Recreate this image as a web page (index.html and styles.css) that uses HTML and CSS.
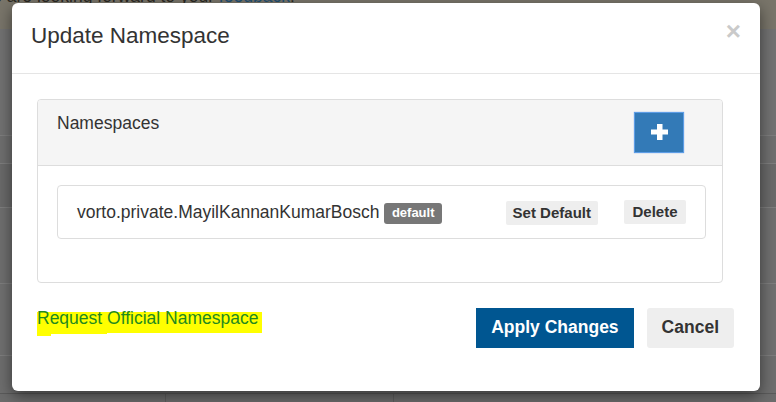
FILE: index.html
```html
<!DOCTYPE html>
<html>
<head>
<meta charset="utf-8">
<link rel="stylesheet" href="styles.css">
</head>
<body>
<div class="page">
  <div class="page-top"><p class="page-text">We are looking forward to your <span class="page-link">feedback</span>!</p></div>
  <div class="page-row r1"></div>
  <div class="page-row r2"></div>
  <div class="page-row r3"></div>
  <div class="page-row r4"></div>
  <div class="page-row r5"></div>
  <div class="page-row r6"><span class="cell c1"></span><span class="cell c2"></span><span class="cell c3"></span></div>
</div>

<div class="modal">
  <div class="modal-header">
    <h4 class="modal-title">Update Namespace</h4>
    <button class="close" type="button">×</button>
  </div>
  <div class="modal-body">
    <div class="panel">
      <div class="panel-heading">
        <span class="panel-title">Namespaces</span>
        <button class="btn-add" type="button">
          <svg width="17" height="16" viewBox="0 0 17 16"><rect x="6" y="0" width="5.5" height="16" fill="#fff"/><rect x="0" y="5.5" width="17" height="5" fill="#fff"/></svg>
        </button>
      </div>
      <div class="panel-body">
        <div class="list-item">
          <div class="ns-name">vorto.private.MayilKannanKumarBosch <span class="label">default</span></div>
          <div class="item-actions">
            <button class="btn-xs btn-setdefault" type="button">Set Default</button>
            <button class="btn-xs btn-delete" type="button">Delete</button>
          </div>
        </div>
      </div>
    </div>
  </div>
  <div class="modal-footer">
    <a class="request-link">Request Official Namespace</a>
    <div class="footer-actions">
      <button class="btn-apply" type="button">Apply Changes</button>
      <button class="btn-cancel" type="button">Cancel</button>
    </div>
  </div>
</div>
</body>
</html>
```

FILE: styles.css
```css
html, body {
  margin: 0;
  padding: 0;
}
body {
  width: 776px;
  height: 402px;
  overflow: hidden;
  position: relative;
  background: #6e6e6e;
  font-family: "Liberation Sans", Arial, sans-serif;
  font-size: 17.5px;
  color: #333;
}
button {
  font-family: inherit;
  border: 0;
  cursor: pointer;
}

/* page behind the backdrop */
.page {
  display: flex;
  flex-direction: column;
  height: 402px;
  overflow: hidden;
}
.page-top {
  height: 29px;
  flex: none;
  background: #79756a;
  overflow: hidden;
}
.page-text {
  margin: -14px 0 0 -24px;
  font-size: 17.5px;
  line-height: 20px;
  color: #2a2822;
  white-space: nowrap;
}
.page-link {
  color: #1f4f72;
}
.page-row {
  flex: none;
  border-bottom: 1px solid #7e7e7e;
  box-sizing: border-box;
}
.r1 { height: 107px; background: #727272; }
.r2 { height: 28px; background: #6f6f6f; }
.r3 { height: 44px; background: #6a6a6a; }
.r4 { height: 76px; background: #6f6f6f; }
.r5 { height: 72px; background: #707070; }
.r6 { height: 9px; background: #6c6c6c; border-bottom: 0; border-top: 1px solid #5a5a5a; display: flex; margin-top: 37px; }
.cell { display: block; height: 100%; border-right: 1px solid #5e5e5e; }
.c1 { width: 165px; }
.c2 { width: 227px; }
.c3 { flex: 1; border-right: 0; }

/* modal */
.modal {
  position: absolute;
  left: 12px;
  top: 3px;
  width: 748px;
  height: 388px;
  background: #fff;
  border-radius: 6px;
  box-shadow: 0 5px 15px rgba(0, 0, 0, 0.5);
  display: flex;
  flex-direction: column;
  box-sizing: border-box;
}
.modal-header {
  height: 71px;
  box-sizing: border-box;
  border-bottom: 1px solid #e5e5e5;
  padding: 20px 20px 0 19px;
  display: flex;
  justify-content: space-between;
  align-items: flex-start;
}
.modal-title {
  margin: 0;
  font-size: 22.5px;
  font-weight: normal;
  line-height: 25px;
  color: #333;
}
.close {
  background: none;
  padding: 0;
  font-size: 26px;
  font-weight: bold;
  line-height: 26px;
  color: #cacaca;
  margin-top: -5px;
  margin-right: -1px;
}

.modal-body {
  padding: 25px 37px 0 25px;
}
.panel {
  border: 1px solid #ddd;
  border-radius: 4px;
  height: 184px;
  box-sizing: border-box;
}
.panel-heading {
  background: #f5f5f5;
  border-bottom: 1px solid #ddd;
  border-radius: 3px 3px 0 0;
  padding: 12px 38px 12px 19px;
  display: flex;
  justify-content: space-between;
  align-items: flex-start;
}
.panel-title {
  line-height: 25px;
  margin-top: -1px;
  color: #333;
}
.btn-add {
  width: 50px;
  height: 41px;
  box-sizing: border-box;
  background: #337ab7;
  border: 1px solid #5d9de6;
  box-shadow: 0 0 1px 0 rgba(90, 150, 230, 0.8);
  display: flex;
  align-items: center;
  justify-content: center;
  padding: 0 0 2px 0;
}
.btn-add svg {
  display: block;
}
.panel-body {
  padding: 19px 16px 0 19px;
}
.list-item {
  border: 1px solid #ddd;
  border-radius: 4px;
  padding: 13px 19px;
  display: flex;
  justify-content: space-between;
  align-items: center;
}
.ns-name {
  line-height: 25px;
  color: #333;
}
.label {
  display: inline-block;
  background: #777;
  color: #fff;
  font-size: 13px;
  font-weight: bold;
  line-height: 13px;
  padding: 3px 7.5px 5px 7.5px;
  border-radius: 3px;
  vertical-align: 1px;
}
.item-actions {
  display: flex;
  align-items: center;
  gap: 26px;
}
.btn-xs {
  background: #eee;
  color: #333;
  font-size: 15px;
  font-weight: bold;
  border-radius: 2px;
  height: 24px;
  line-height: 24px;
}
.btn-setdefault {
  padding: 0 7px;
  margin-top: 2px;
}
.btn-delete {
  padding: 0 8.5px;
  line-height: 22px;
}

.modal-footer {
  padding: 25px 26px 0 25px;
  display: flex;
  justify-content: space-between;
  align-items: flex-start;
}
.request-link {
  position: relative;
  z-index: 0;
  display: inline-block;
  line-height: 25px;
  margin-top: -2px;
  color: #1f8a1f;
}
.request-link::before {
  content: "";
  position: absolute;
  left: 0;
  right: -4px;
  top: 6px;
  bottom: -2px;
  background: #ffff00;
  z-index: -1;
}
.request-link::after {
  content: "";
  position: absolute;
  left: 0;
  width: 70px;
  top: 27px;
  height: 3px;
  background: #ffff00;
  z-index: -1;
  clip-path: polygon(0 0, 100% 0, 100% 30%, 20% 30%, 20% 100%, 0 100%);
}
.footer-actions {
  display: flex;
  gap: 13px;
}
.btn-apply {
  background: #005691;
  color: #fff;
  font-size: 17.5px;
  font-weight: bold;
  line-height: 20px;
  padding: 9px 15px 11px;
  height: 40px;
  box-sizing: border-box;
}
.btn-cancel {
  background: #eee;
  color: #333;
  font-size: 17.5px;
  font-weight: bold;
  line-height: 20px;
  padding: 9px 15px 11px;
  height: 40px;
  box-sizing: border-box;
  border-radius: 3px;
}
```
